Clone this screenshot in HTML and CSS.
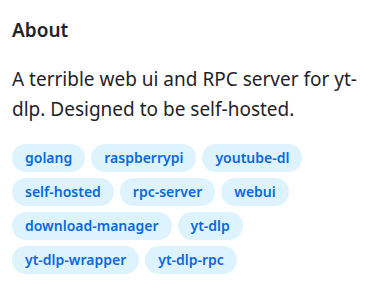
FILE: index.html
```html
<!DOCTYPE html>
<html lang="en">
<head>
    <meta charset="UTF-8">
    <title>About</title>
    <link rel="stylesheet" href="styles.css">
</head>
<body>
    <div class="about">
        <h2 class="about-title">About</h2>
        <p class="about-desc">A terrible web ui and RPC server for yt-dlp. Designed to be self-hosted.</p>
        <div class="topics">
            <a class="topic" href="#">golang</a>
            <a class="topic" href="#">raspberrypi</a>
            <a class="topic" href="#">youtube-dl</a>
            <a class="topic" href="#">self-hosted</a>
            <a class="topic" href="#">rpc-server</a>
            <a class="topic" href="#">webui</a>
            <a class="topic" href="#">download-manager</a>
            <a class="topic" href="#">yt-dlp</a>
            <a class="topic" href="#">yt-dlp-wrapper</a>
            <a class="topic" href="#">yt-dlp-rpc</a>
        </div>
    </div>
</body>
</html>
```

FILE: styles.css
```css
body {
    margin: 0;
    background-color: #fff;
    font-family: "Noto Sans", "Open Sans", sans-serif;
    color: #1f2328;
}

.about {
    padding: 15px 12px 0 12px;
    width: 345px;
}

.about-title {
    font-size: 19px;
    font-weight: 600;
    line-height: 30px;
    margin: 0 0 19px 0;
}

.about-desc {
    font-size: 19px;
    line-height: 30px;
    margin: 0 0 20px 0;
}

.topics {
    display: flex;
    flex-wrap: wrap;
    gap: 6px;
}

.topic {
    display: inline-block;
    padding: 0 13px;
    line-height: 28px;
    font-size: 14px;
    font-weight: 600;
    color: #0969da;
    background-color: #ddf4ff;
    border-radius: 999px;
    text-decoration: none;
}
```
